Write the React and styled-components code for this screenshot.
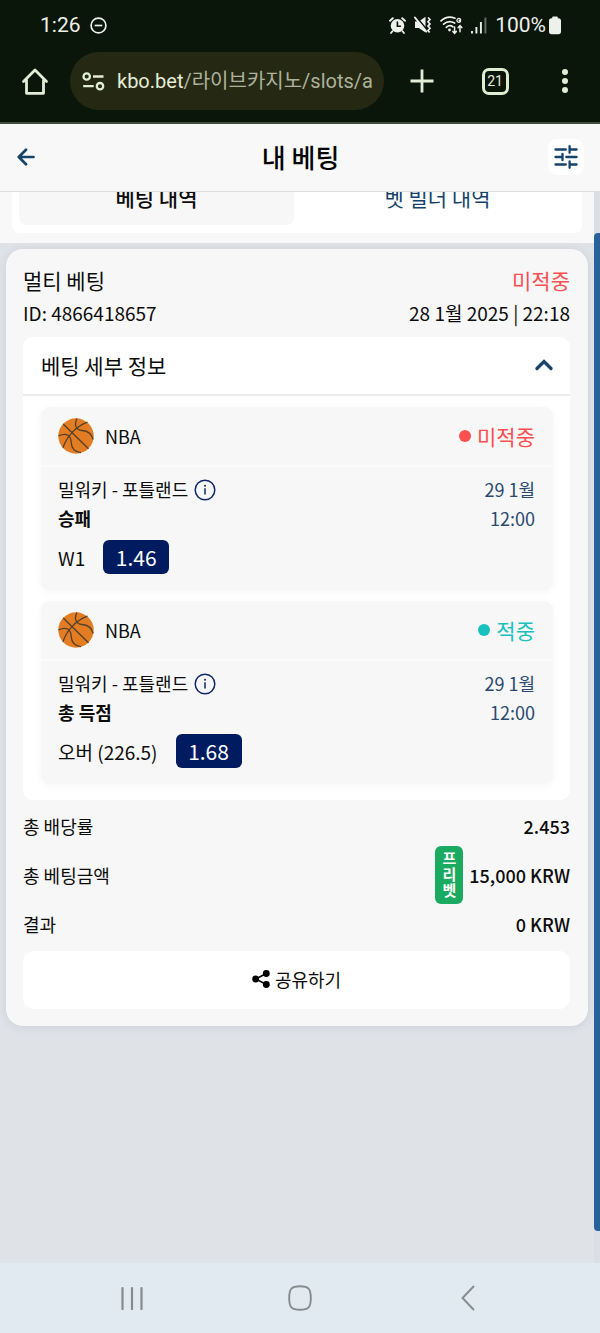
import React from 'react';
import styled, { createGlobalStyle } from 'styled-components';

const GlobalStyle = createGlobalStyle`
  * {
    box-sizing: border-box;
  }
  body {
    margin: 0;
    background: #dfe2e7;
    color: #0c0c0c;
    font-family: "Noto Sans CJK KR", "Noto Sans", sans-serif;
    font-size: 18px;
  }
  button {
    border: 0;
    padding: 0;
    background: none;
    color: inherit;
    font: inherit;
    cursor: pointer;
  }
  svg {
    display: block;
    flex: none;
  }
`

const Screen = styled.div`
  display: flex;
  flex-direction: column;
  min-height: 100vh;
`

/* phone + browser bars */

const BrowserTop = styled.div`
  background: #0a160a;
  color: #e3edd6;
  border-bottom: 2px solid #434d40;
  font-family: Roboto, "Noto Sans CJK KR", sans-serif;
`

const StatusBar = styled.div`
  display: flex;
  align-items: center;
  justify-content: space-between;
  height: 52px;
  padding: 0 39px 2px 40px;
  color: #eef0ec;
  font-size: 21px;
`

const StatusGroup = styled.div`
  display: flex;
  align-items: center;
  gap: ${props => props.$gap}px;
`

const AddressBar = styled.div`
  display: flex;
  align-items: center;
  padding-bottom: 12px;
`

const BarButton = styled.button`
  display: flex;
  align-items: center;
  justify-content: center;
  width: ${props => props.$wide ? 76 : 70}px;
  height: 58px;
`

const Address = styled.button`
  display: flex;
  flex: 1;
  align-items: center;
  gap: 12px;
  min-width: 0;
  height: 58px;
  padding: 0 12px;
  border-radius: 29px;
  background: #252914;
  white-space: nowrap;
  overflow: hidden;
`

const Url = styled.span`
  color: #e6ecd6;
  font-size: 20px;
  line-height: 28px;
`

const UrlPath = styled.span`
  color: #adb39b;
`

const TabCount = styled.span`
  display: flex;
  align-items: center;
  justify-content: center;
  width: 27px;
  height: 27px;
  border: 3px solid #dfedd0;
  border-radius: 7px;
  font-size: 14px;
`

const NavBar = styled.nav`
  display: flex;
  height: 70px;
  padding: 0 48px;
  background: #e1e9f1;
  color: #848c8f;
`

const NavButton = styled.button`
  display: flex;
  flex: 1;
  align-items: center;
  justify-content: center;
`

/* page */

const Header = styled.header`
  display: grid;
  grid-template-columns: 36px 1fr 36px;
  align-items: center;
  height: 68px;
  padding: 0 16px 2px 17px;
  border-bottom: 1px solid #dcdee0;
  background: #f8f8f8;
  color: #17436b;
`

const Title = styled.h1`
  margin: 0;
  color: #050505;
  font-size: 26px;
  font-weight: 500;
  line-height: 36px;
  text-align: center;
`

const BackButton = styled.button`
  display: flex;
  align-items: center;
  height: 36px;
`

const FilterButton = styled.button`
  display: flex;
  align-items: center;
  justify-content: center;
  height: 36px;
  border-radius: 9px;
  background: #fff;
`

const Body = styled.div`
  display: flex;
  flex: 1;
`

const Main = styled.main`
  flex: 1;
  min-width: 0;
`

const ScrollTrack = styled.div`
  display: flex;
  width: 6px;
  padding: 41px 0 32px;
  background: #dbdfe5;
`

const ScrollThumb = styled.div`
  flex: 1;
  border-radius: 4px 0 0 4px;
  background: #27639a;
`

/* scrolled halfway under the header */
const TabStrip = styled.div`
  display: flex;
  align-items: flex-end;
  height: 51px;
  padding: 0 12px 10px;
  overflow: hidden;
  background: #f8f8f8;
`

const TabPanel = styled.div`
  display: flex;
  flex: 1;
  gap: 6px;
  padding: 8px 7px;
  border-radius: 8px;
  background: #fff;
`

const Tab = styled.button`
  flex: 1;
  height: 54px;
  padding-bottom: 3px;
  border-radius: 8px;
  background: ${props => props.$active ? '#f7f7f7' : 'transparent'};
  color: ${props => props.$active ? '#0c0c0c' : '#17436b'};
  font-size: 21px;
  font-weight: ${props => props.$active ? 500 : 400};
`

const Ticket = styled.section`
  margin: 6px 6px 0;
  padding: 14px 18px 17px 17px;
  border-radius: 17px;
  background: #f7f7f7;
  box-shadow: 0 1px 8px rgba(120, 130, 145, 0.18);
`

const Line = styled.div`
  display: flex;
  align-items: center;
  justify-content: space-between;
  height: 33px;
  font-size: ${props => props.$large ? 21 : 19}px;
`

const Result = styled.span`
  display: flex;
  align-items: center;
  gap: 6px;
  color: ${props => props.$won ? '#18c1bf' : '#fb4f50'};
  font-size: 21px;
`

const Dot = styled.span`
  width: 12px;
  height: 12px;
  border-radius: 50%;
  background: currentColor;
`

const Details = styled.div`
  margin-top: 8px;
  border-radius: 10px;
  background: #fff;
`

const DetailsToggle = styled.button`
  display: flex;
  align-items: center;
  justify-content: space-between;
  width: 100%;
  height: 59px;
  padding: 0 17px 1px 18px;
  border-bottom: 2px solid #ebecee;
  font-size: 21px;
`

const Games = styled.div`
  display: flex;
  flex-direction: column;
  gap: 11px;
  padding: 11px 17px 16px 18px;
`

const GameCard = styled.article`
  border-radius: 9px;
  background: #f7f7f7;
  box-shadow: 0 2px 9px rgba(0, 0, 0, 0.04);
`

const GameHead = styled.div`
  display: flex;
  align-items: center;
  justify-content: space-between;
  height: 60px;
  padding: 0 18px 0 17px;
  border-bottom: 2px solid #fbfbfb;
`

const League = styled.div`
  display: flex;
  align-items: center;
  gap: 11px;
`

const GameBody = styled.div`
  display: flex;
  justify-content: space-between;
  padding: 8px 18px 16px 17px;
  line-height: 29px;
`

const Teams = styled.div`
  display: flex;
  align-items: center;
  gap: 6px;
`

const InfoButton = styled.button`
  color: #10296a;
`

const Market = styled.div`
  font-weight: 700;
`

const Pick = styled.div`
  display: flex;
  align-items: center;
  gap: 18px;
  margin-top: 7px;
`

const PickName = styled.span`
  font-size: 19px;
`

const Odds = styled.span`
  width: 66px;
  border-radius: 6px;
  background: #001b5f;
  color: #fff;
  font-size: 21px;
  line-height: 34px;
  text-align: center;
`

const Kickoff = styled.time`
  color: #2a4a70;
  text-align: right;
`

const Summary = styled.div`
  padding: 1px 0 3px;
`

const SummaryRow = styled.div`
  display: flex;
  align-items: center;
  justify-content: space-between;
  height: 49px;
`

const Amount = styled.div`
  display: flex;
  align-items: center;
  gap: 6px;
  font-weight: 500;
`

const FreeBet = styled.span`
  width: 28px;
  padding: 4px 6px 6px;
  border-radius: 6px;
  background: #1bab60;
  color: #fff;
  font-size: 15px;
  font-weight: 700;
  line-height: 16px;
  text-align: center;
  word-break: break-all;
`

const ShareButton = styled.button`
  display: flex;
  align-items: center;
  justify-content: center;
  gap: 5px;
  width: 100%;
  height: 58px;
  padding-bottom: 2px;
  border-radius: 11px;
  background: #fff;
`

const DoNotDisturbIcon = () => (
  <svg width="17" height="17" viewBox="0 0 17 17" fill="none" stroke="currentColor" strokeWidth="1.7">
    <circle cx="8.5" cy="8.5" r="7.4" />
    <path d="M4.7 8.5h7.6" />
  </svg>
)

const AlarmIcon = () => (
  <svg width="17" height="17" viewBox="0 0 17 17" fill="none" stroke="currentColor" strokeLinecap="round">
    <circle cx="8.5" cy="8.7" r="6.8" fill="currentColor" stroke="none" />
    <path d="M1 3.8L3.8 1.2M16 3.8L13.2 1.2" strokeWidth="1.9" />
    <path d="M3.4 14.2L2 16M13.6 14.2L15 16" strokeWidth="1.8" />
    <path d="M8.4 5v4.2h3" stroke="#0a160a" strokeWidth="1.6" />
  </svg>
)

const MuteIcon = () => (
  <svg width="18" height="18" viewBox="0 0 18 18">
    <path d="M1 5.5h3.8L11.5 0.8v15.6L4.8 12H1z" fill="currentColor" />
    <path d="M1.600 0l12 14.500" stroke="#0a160a" strokeWidth="1.600" />
    <path d="M0.8 1.4L12.4 15.6" stroke="currentColor" strokeWidth="1.7" strokeLinecap="round" />
    <path d="M14 1.5l2 2-2 2.2 2 2.2-2 2.2 2 2.2-2 2.2 1.6 2" fill="none" stroke="currentColor" strokeWidth="1.7" />
  </svg>
)

const WifiIcon = () => (
  <svg width="23" height="19" viewBox="0 0 23 19" fill="none" stroke="currentColor" strokeWidth="1.7" strokeLinecap="round">
    <path d="M1 4.8C5 1 10.5 0.3 15 2.2M3.6 8.2c2.9-2.7 7.3-3.3 11-1.2M6.3 11.3c2-1.8 4.7-1.9 6.6-.5" />
    <circle cx="9.5" cy="14" r="1.4" fill="currentColor" stroke="none" />
    <path d="M20.5 3.2c-1.5-1.5-3.6-.5-3.6 1.2 0 2 2.6 2.6 3.6.9v-.8h-1.4" strokeWidth="1.3" />
    <path d="M14.6 11v6.4m-1.7-2l1.7 2 1.7-2M20 15.8V9.6m-1.8 2L20 9.6l1.8 2" strokeWidth="1.5" />
  </svg>
)

const SignalIcon = () => (
  <svg width="16" height="17" viewBox="0 0 16 17" fill="none" stroke="currentColor" strokeWidth="1.9">
    <path d="M1 14v2.5M5.4 10v6.5M9.9 5v11.5" />
    <path d="M14.4 0.5v16" opacity="0.4" />
  </svg>
)

const BatteryIcon = () => (
  <svg width="12" height="19" viewBox="0 0 12 19" fill="currentColor">
    <rect x="3.2" y="0.5" width="5.6" height="4" rx="1" />
    <rect x="0" y="2.2" width="12" height="16" rx="2.6" />
  </svg>
)

const HomeIcon = () => (
  <svg width="28" height="28" viewBox="0 0 28 28" fill="none" stroke="currentColor" strokeWidth="2.8" strokeLinejoin="round" strokeLinecap="round">
    <path d="M2.5 14.5L14 3l11.5 11.5M5.5 13v13.300h17V13" />
  </svg>
)

const SiteIcon = () => (
  <svg width="23" height="19" viewBox="0 0 23 19" fill="none" stroke="currentColor" strokeWidth="2.3">
    <circle cx="4.7" cy="4.5" r="3.2" />
    <circle cx="18" cy="14.2" r="3.2" />
    <path d="M11 4.5h10.5M1.2 14.2h10.5" />
  </svg>
)

const PlusIcon = () => (
  <svg width="24" height="24" viewBox="0 0 24 24" stroke="currentColor" strokeWidth="2.8">
    <path d="M12 0.5v23M0.5 12h23" />
  </svg>
)

const MoreIcon = () => (
  <svg width="8" height="26" viewBox="0 0 8 26" fill="currentColor">
    <circle cx="4" cy="4" r="3" />
    <circle cx="4" cy="13" r="3" />
    <circle cx="4" cy="22" r="3" />
  </svg>
)

const BackIcon = () => (
  <svg width="18" height="18" viewBox="0 0 18 18" fill="none" stroke="currentColor" strokeWidth="2.7" strokeLinecap="round" strokeLinejoin="round">
    <path d="M16.5 9H2M9 1.7L1.8 9 9 16.3" />
  </svg>
)

const FilterIcon = () => (
  <svg width="24" height="24" viewBox="0 0 24 24" fill="none" stroke="currentColor" strokeWidth="2.3" strokeLinecap="round">
    <path d="M1.5 4.5h10.3M15.6 4.5h7M15.6 1.2v6.6" />
    <path d="M1.5 12h6.8M8.5 8.8v6.4M12.3 12h10.3" />
    <path d="M1.5 19.5h10.3M15.6 19.5h7M15.6 16.4v6.4" />
  </svg>
)

const ChevronIcon = () => (
  <svg width="18" height="12" viewBox="0 0 18 12" fill="none" stroke="#17436b" strokeWidth="3.2" strokeLinecap="round">
    <path d="M2 9.5l7-7 7 7" />
  </svg>
)

const BallIcon = () => (
  <svg width="36" height="36" viewBox="0 0 36 36" fill="none" stroke="#54402c" strokeWidth="1.3">
    <circle cx="18" cy="18" r="17.7" fill="#e37c22" stroke="none" />
    <path d="M5.2 6L30.5 30.8" />
    <path d="M29.5 4.2C18 8.5 8.5 18.5 5 29.8" />
    <path d="M19 .5C16 6.5 17.5 12 24 12.5C31 13 34 16.5 35.2 21.5" />
    <path d="M.5 17.8C9 14 13 18 13.2 24.5C13.5 30.5 16.5 34 23 34.6" />
  </svg>
)

const InfoIcon = () => (
  <svg width="22" height="22" viewBox="0 0 22 22" fill="none" stroke="currentColor" strokeWidth="1.5">
    <circle cx="11" cy="11" r="9.8" />
    <path d="M11 9.2v6.3" />
    <circle cx="11" cy="6.8" r="1" fill="currentColor" stroke="none" />
  </svg>
)

const ShareIcon = () => (
  <svg width="18" height="18" viewBox="0 0 18 18" fill="#000" stroke="#000" strokeWidth="1.5">
    <path d="M14.3 3.5L3.7 9l10.6 5.5" fill="none" />
    <circle cx="14.3" cy="3.5" r="2.7" />
    <circle cx="3.7" cy="9" r="2.7" />
    <circle cx="14.3" cy="14.5" r="2.7" />
  </svg>
)

const RecentsIcon = () => (
  <svg width="24" height="24" viewBox="0 0 24 24" stroke="currentColor" strokeWidth="2.2" strokeLinecap="round">
    <path d="M2.5 2v21M12 2v21M21.5 2v21" />
  </svg>
)

const SquareIcon = () => (
  <svg width="24" height="26" viewBox="0 0 24 26" fill="none" stroke="currentColor" strokeWidth="1.9">
    <path d="M12 1.2c8.5 0 10.8 2.3 10.8 11.8S20.5 24.8 12 24.8 1.2 22.5 1.2 13 3.5 1.2 12 1.2z" />
  </svg>
)

const PrevIcon = () => (
  <svg width="14" height="26" viewBox="0 0 14 26" fill="none" stroke="currentColor" strokeWidth="1.9" strokeLinecap="round">
    <path d="M12.5 1.5L1.5 13l11 11.5" />
  </svg>
)

const games = [
  { id: 1, market: '승패', pick: 'W1', odds: '1.46', won: false },
  { id: 2, market: '총 득점', pick: '오버 (226.5)', odds: '1.68', won: true },
]

const Game = ({ game }) => (
  <GameCard>
    <GameHead>
      <League>
        <BallIcon />
        <span>NBA</span>
      </League>
      <Result $won={game.won}>
        <Dot />
        {game.won ? '적중' : '미적중'}
      </Result>
    </GameHead>
    <GameBody>
      <div>
        <Teams>
          밀워키 - 포틀랜드
          <InfoButton aria-label="정보"><InfoIcon /></InfoButton>
        </Teams>
        <Market>{game.market}</Market>
        <Pick>
          <PickName>{game.pick}</PickName>
          <Odds>{game.odds}</Odds>
        </Pick>
      </div>
      <Kickoff>
        29 1월<br />12:00
      </Kickoff>
    </GameBody>
  </GameCard>
)

const App = () => (
  <Screen>
    <GlobalStyle />
    <BrowserTop>
      <StatusBar>
        <StatusGroup $gap={9}>
          <span>1:26</span>
          <DoNotDisturbIcon />
        </StatusGroup>
        <StatusGroup $gap={8}>
          <AlarmIcon />
          <MuteIcon />
          <WifiIcon />
          <SignalIcon />
          <StatusGroup $gap={3}>
            <span>100%</span>
            <BatteryIcon />
          </StatusGroup>
        </StatusGroup>
      </StatusBar>
      <AddressBar>
        <BarButton aria-label="홈"><HomeIcon /></BarButton>
        <Address>
          <SiteIcon />
          <Url>kbo.bet<UrlPath>/라이브카지노/slots/a</UrlPath></Url>
        </Address>
        <BarButton $wide aria-label="새 탭"><PlusIcon /></BarButton>
        <BarButton><TabCount>21</TabCount></BarButton>
        <BarButton aria-label="메뉴"><MoreIcon /></BarButton>
      </AddressBar>
    </BrowserTop>

    <Header>
      <BackButton aria-label="뒤로"><BackIcon /></BackButton>
      <Title>내 베팅</Title>
      <FilterButton aria-label="필터"><FilterIcon /></FilterButton>
    </Header>

    <Body>
      <Main>
        <TabStrip>
          <TabPanel>
            <Tab $active>베팅 내역</Tab>
            <Tab>벳 빌더 내역</Tab>
          </TabPanel>
        </TabStrip>

        <Ticket>
          <Line $large>
            <span>멀티 베팅</span>
            <Result>미적중</Result>
          </Line>
          <Line>
            <span>ID: 4866418657</span>
            <span>28 1월 2025 | 22:18</span>
          </Line>

          <Details>
            <DetailsToggle aria-expanded="true">
              베팅 세부 정보
              <ChevronIcon />
            </DetailsToggle>
            <Games>
              {games.map(game => <Game key={game.id} game={game} />)}
            </Games>
          </Details>

          <Summary>
            <SummaryRow>
              <span>총 배당률</span>
              <Amount>2.453</Amount>
            </SummaryRow>
            <SummaryRow>
              <span>총 베팅금액</span>
              <Amount>
                <FreeBet>프리벳</FreeBet>
                15,000 KRW
              </Amount>
            </SummaryRow>
            <SummaryRow>
              <span>결과</span>
              <Amount>0 KRW</Amount>
            </SummaryRow>
          </Summary>

          <ShareButton>
            <ShareIcon />
            공유하기
          </ShareButton>
        </Ticket>
      </Main>
      <ScrollTrack>
        <ScrollThumb />
      </ScrollTrack>
    </Body>

    <NavBar>
      <NavButton aria-label="최근 앱"><RecentsIcon /></NavButton>
      <NavButton aria-label="홈 화면"><SquareIcon /></NavButton>
      <NavButton aria-label="이전"><PrevIcon /></NavButton>
    </NavBar>
  </Screen>
)

export default App;
